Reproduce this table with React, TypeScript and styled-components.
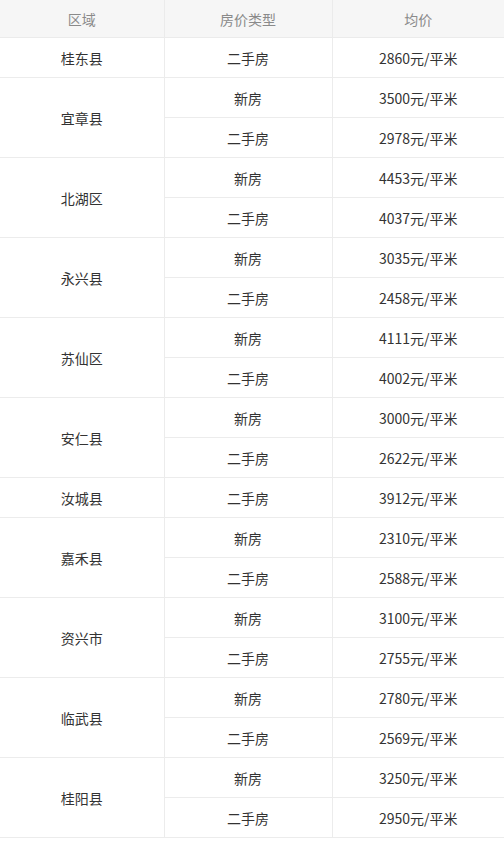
import React from 'react'
import styled, { createGlobalStyle } from 'styled-components'

interface PriceRow {
  type: string
  price: number
}

interface Region {
  name: string
  rows: PriceRow[]
}

const regions: Region[] = [
  { name: '桂东县', rows: [{ type: '二手房', price: 2860 }] },
  { name: '宜章县', rows: [{ type: '新房', price: 3500 }, { type: '二手房', price: 2978 }] },
  { name: '北湖区', rows: [{ type: '新房', price: 4453 }, { type: '二手房', price: 4037 }] },
  { name: '永兴县', rows: [{ type: '新房', price: 3035 }, { type: '二手房', price: 2458 }] },
  { name: '苏仙区', rows: [{ type: '新房', price: 4111 }, { type: '二手房', price: 4002 }] },
  { name: '安仁县', rows: [{ type: '新房', price: 3000 }, { type: '二手房', price: 2622 }] },
  { name: '汝城县', rows: [{ type: '二手房', price: 3912 }] },
  { name: '嘉禾县', rows: [{ type: '新房', price: 2310 }, { type: '二手房', price: 2588 }] },
  { name: '资兴市', rows: [{ type: '新房', price: 3100 }, { type: '二手房', price: 2755 }] },
  { name: '临武县', rows: [{ type: '新房', price: 2780 }, { type: '二手房', price: 2569 }] },
  { name: '桂阳县', rows: [{ type: '新房', price: 3250 }, { type: '二手房', price: 2950 }] },
]

const GlobalStyle = createGlobalStyle`
  body {
    margin: 0;
    background: #fff;
    font-family: "Noto Sans CJK SC", "Noto Sans", sans-serif;
  }
`

const Table = styled.table`
  width: 504px;
  border-collapse: collapse;
  table-layout: fixed;
`

const HeadCell = styled.th`
  height: 37px;
  padding: 0;
  background: #f6f6f6;
  color: #8a8a8a;
  font-size: 14px;
  font-weight: normal;
  text-align: center;
  border-bottom: 1px solid #ebebeb;
  border-left: 1px solid #ebebeb;
  &:first-child {
    border-left: none;
  }
`

const Cell = styled.td<{ $first?: boolean }>`
  height: 39px;
  padding: 0;
  color: #333;
  font-size: 14px;
  text-align: center;
  vertical-align: middle;
  border-bottom: 1px solid #ececec;
  border-left: ${(p) => (p.$first ? 'none' : '1px solid #ececec')};
`

const App: React.FC = () => (
  <>
    <GlobalStyle />
    <Table>
      <colgroup>
        <col style={{ width: 164 }} />
        <col style={{ width: 168 }} />
        <col style={{ width: 172 }} />
      </colgroup>
      <thead>
        <tr>
          <HeadCell>区域</HeadCell>
          <HeadCell>房价类型</HeadCell>
          <HeadCell>均价</HeadCell>
        </tr>
      </thead>
      <tbody>
        {regions.map((region) =>
          region.rows.map((row, i) => (
            <tr key={region.name + row.type}>
              {i === 0 && (
                <Cell $first rowSpan={region.rows.length}>
                  {region.name}
                </Cell>
              )}
              <Cell>{row.type}</Cell>
              <Cell>{row.price}元/平米</Cell>
            </tr>
          ))
        )}
      </tbody>
    </Table>
  </>
)

export default App
